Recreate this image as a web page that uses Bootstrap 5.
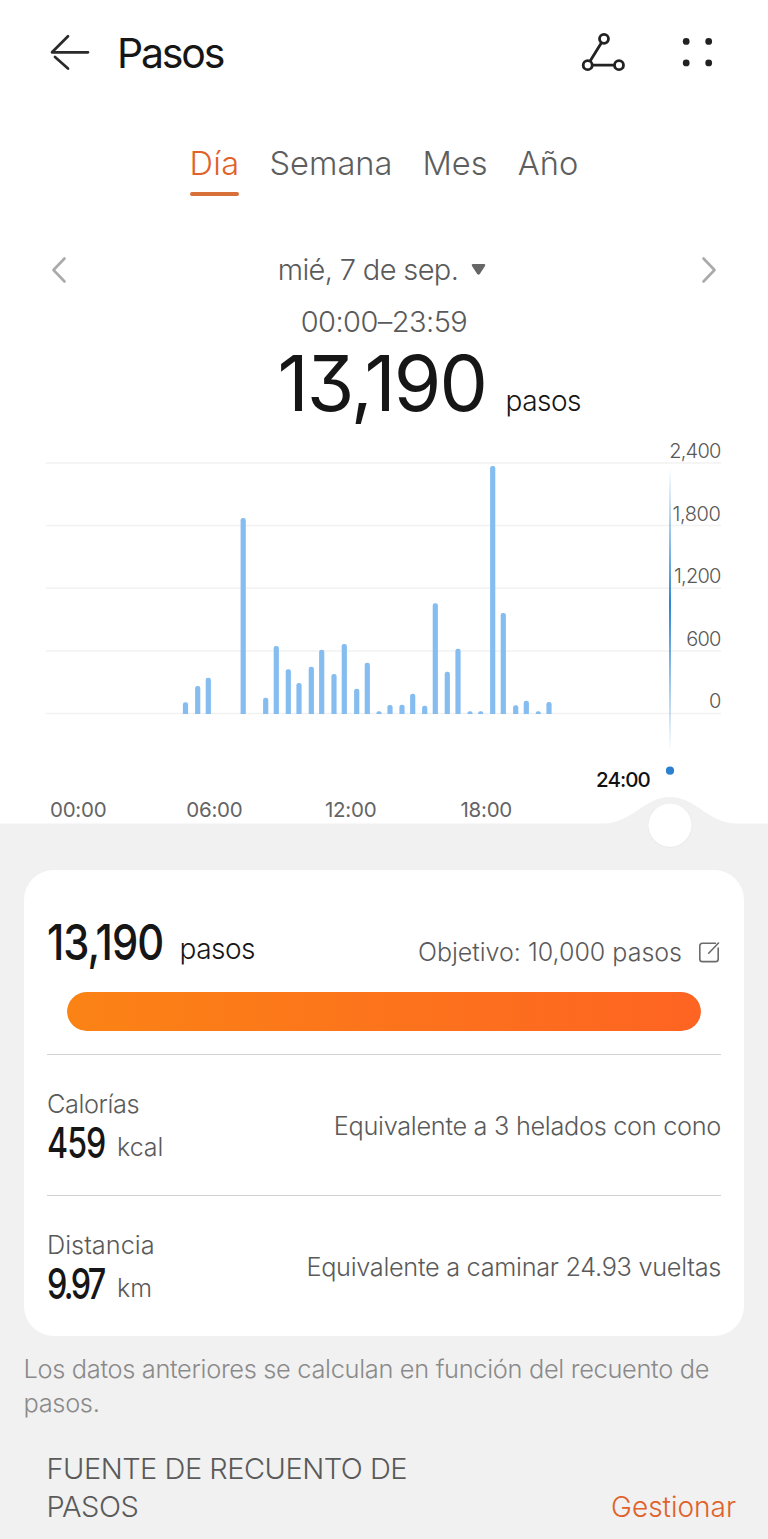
<!DOCTYPE html>
<html lang="es">
<head>
<meta charset="utf-8">
<meta name="viewport" content="width=device-width, initial-scale=1">
<title>Pasos</title>
<link rel="stylesheet" href="https://cdn.jsdelivr.net/npm/bootstrap@5.3.0/dist/css/bootstrap.min.css">
<style>
body{font-family:Inter,"Noto Sans",sans-serif;font-weight:300;background:#f1f1f1;color:#5a5a5a;overflow-x:hidden}
.ink{color:#161616}
.accent{color:#e0622a}
.topbar{height:106px;padding:0 52px 0 50px}
.topbar h1{font-size:41px;font-weight:400;line-height:60px;letter-spacing:-2.2px;margin-left:26px}
.periods{padding-top:36px;gap:31px}
.periods .nav-link{padding:0;color:#5e5e5e;font-size:32.6px;line-height:43px;text-align:center;white-space:nowrap}
.periods .nav-link.active{color:#e0622a}
.periods .nav-link::after{content:"";display:block;height:4.5px;margin-top:6.5px;border-radius:3px}
.periods .nav-link.active::after{background:#d8703a}
.w-dia{width:49px;letter-spacing:.3px}.w-sem{width:122px}.w-mes{width:64px}.w-ano{width:61px}
.daterow{margin-top:52px;height:44px;padding:0 51px}
.dateline{font-size:29px;letter-spacing:-.65px;line-height:44px;margin-left:-4px}
.hours{margin-top:10px;font-size:29px;letter-spacing:-.55px;line-height:40px}
.total{height:82px;padding-left:277.5px;padding-top:1px}
.total .figure-xl{font-size:76.8px;font-weight:400;line-height:82px;letter-spacing:-1.9px;width:228px;font-feature-settings:"cv09"}
.unit{font-size:28px;font-weight:350;letter-spacing:-.5px}
.chart{display:block;font-size:20px}
.panel{margin:0 24px 0 23.5px;height:465.5px;border-radius:30px;padding:36px 23px 0 23.5px}
.goalrow{height:72px}
.narrow{display:inline-block;transform-origin:0 50%;font-weight:500;white-space:nowrap}
.n-steps{font-size:50px;line-height:72px;width:132.5px;letter-spacing:-1.2px;transform:scaleX(.835)}
.n-cal{font-size:42px;width:70px;letter-spacing:-1.2px;transform:scaleX(.765)}
.n-km{font-size:42px;width:70px;letter-spacing:-3.5px;transform:scaleX(.77)}
.goal{font-size:25px;padding-top:22px;letter-spacing:0}
.meter{height:39px;margin:14px 20px 0;border-radius:20px;background:#eee}
.meter .progress-bar{border-radius:20px;background:linear-gradient(90deg,#fb8315,#fe6422)}
.fact{height:141px;border-top:1px solid #d2d2d2;font-size:25.3px}
.fact .label{line-height:36px}
.fact .value{height:42px;line-height:42px}
.fact .value small{font-size:25px;padding-top:7px}
.equiv{letter-spacing:-.3px;padding-top:2px}
.note{margin:16px 24px 0 23.5px;font-size:25.4px;line-height:34px;letter-spacing:-.32px;color:#8a8a8a}
.source{margin:30px 32px 0 46.5px;font-size:29px;line-height:38px;letter-spacing:-.5px}
.source a{font-size:28px;letter-spacing:0}
</style>
</head>
<body>
<section class="bg-white">
  <header class="topbar d-flex align-items-center">
    <svg width="41" height="40" viewBox="50 33 41 40" fill="none" stroke="#2a2a2a" stroke-width="2.7" stroke-linecap="round" stroke-linejoin="round"><path d="M88 52.3H52L68 36.2M55 57L68 68.6"/></svg>
    <h1 class="ink mb-0">Pasos</h1>
    <svg class="ms-auto" width="46" height="42" viewBox="581 32 46 42" fill="none" stroke="#222" stroke-width="2.8"><circle cx="604" cy="38.8" r="4.5"/><circle cx="587.7" cy="65.2" r="4.5"/><circle cx="619" cy="65.2" r="4.5"/><path d="M601.6 42.5L590 61.3M592.3 65.2H614.5"/></svg>
    <svg style="margin-left:53px" width="36" height="36" viewBox="680 35 36 36" fill="#222"><circle cx="686.2" cy="41.4" r="3.4"/><circle cx="708.7" cy="41.4" r="3.4"/><circle cx="686.2" cy="62.9" r="3.4"/><circle cx="708.7" cy="62.9" r="3.4"/></svg>
  </header>

  <nav class="periods nav justify-content-center">
    <a class="nav-link active w-dia" href="#">Día</a>
    <a class="nav-link w-sem" href="#">Semana</a>
    <a class="nav-link w-mes" href="#">Mes</a>
    <a class="nav-link w-ano" href="#">Año</a>
  </nav>

  <div class="daterow d-flex align-items-center justify-content-between">
    <svg width="16" height="28" fill="none" stroke="#aaa" stroke-width="2.6" stroke-linecap="round" stroke-linejoin="round"><path d="M13.5 2.5L2.5 14L13.5 25.5"/></svg>
    <div class="dateline d-flex align-items-center">mié, 7 de sep.<svg class="ms-2 ps-1" width="20" height="14" fill="#666"><path d="M2.6 1H14.4Q16 1.6 15 3L9.8 11Q8.5 12.6 7.2 11L2 3Q1 1.6 2.6 1Z"/></svg></div>
    <svg width="16" height="28" fill="none" stroke="#aaa" stroke-width="2.6" stroke-linecap="round" stroke-linejoin="round"><path d="M2.5 2.5L13.5 14L2.5 25.5"/></svg>
  </div>
  <div class="hours text-center">00:00–23:59</div>
  <div class="total d-flex align-items-baseline ink">
    <div class="figure-xl">13,190</div>
    <div class="unit">pasos</div>
  </div>
</section>

<svg class="chart" width="768" height="446" viewBox="0 424 768 446">
  <defs>
    <linearGradient id="cursor" x1="0" y1="0" x2="0" y2="1"><stop offset="0" stop-color="#2c86d2" stop-opacity="0"/><stop offset=".48" stop-color="#2c86d2"/><stop offset="1" stop-color="#2c86d2" stop-opacity="0"/></linearGradient>
    <clipPath id="plot"><rect x="40" y="440" width="690" height="274"/></clipPath>
  </defs>
  <path fill="#fff" d="M0 424H768V823.5H737C707 823.5 697 797 670 797S633 823.5 603 823.5H0Z"/>
  <path stroke="#f2f2f2" stroke-width="1.5" d="M46 463H721M46 525.5H721M46 588.3H721M46 651H721M46 713.6H721"/>
  <g id="bars" fill="#85bdf0" clip-path="url(#plot)"></g>
  <rect x="669" y="468" width="2" height="284" fill="url(#cursor)"/>
  <g fill="#585858" text-anchor="end" letter-spacing="-.8">
    <text x="720.5" y="458">2,400</text><text x="720.5" y="520.5" letter-spacing="-.4">1,800</text><text x="720.5" y="583.2">1,200</text><text x="720.5" y="645.8">600</text><text x="720.5" y="708.4">0</text>
  </g>
  <g fill="#646464" font-size="20.5" font-weight="400" letter-spacing="-.25">
    <text x="50" y="817">00:00</text><text x="186.3" y="817">06:00</text><text x="325" y="817">12:00</text><text x="460.5" y="817">18:00</text>
  </g>
  <text x="596" y="786.5" fill="#111" font-size="20.5" font-weight="500" letter-spacing="-.9">24:00</text>
  <circle cx="670" cy="770.7" r="4.1" fill="#2c80d0"/>
  <circle cx="670" cy="825.6" r="22.3" fill="#eaeaea"/>
  <circle cx="670" cy="825.2" r="21.6" fill="#fff"/>
</svg>

<main class="panel bg-white">
  <div class="goalrow d-flex align-items-center">
    <div class="narrow n-steps ink">13,190</div>
    <div class="unit ink" style="padding-top:13px">pasos</div>
    <div class="goal ms-auto d-flex align-items-center">Objetivo: 10,000 pasos
      <svg style="margin-left:17px" width="22" height="22" viewBox="0 0 22 22" fill="none" stroke="#6b6b6b" stroke-width="1.6" stroke-linecap="round"><path d="M16.5 1.2H3.5Q.8 1.2 .8 3.9V16.9Q.8 19.6 3.5 19.6H16.5Q19.2 19.6 19.2 16.9V6M9.7 11.2L19.5 1"/></svg>
    </div>
  </div>
  <div class="progress meter"><div class="progress-bar" style="width:100%"></div></div>
  <div class="fact d-flex align-items-center justify-content-between" style="margin-top:23px">
    <div><div class="label" style="letter-spacing:-.4px">Calorías</div><div class="value d-flex align-items-center"><span class="narrow n-cal ink">459</span><small>kcal</small></div></div>
    <div class="equiv">Equivalente a 3 helados con cono</div>
  </div>
  <div class="fact d-flex align-items-center justify-content-between">
    <div><div class="label">Distancia</div><div class="value d-flex align-items-center"><span class="narrow n-km ink">9.97</span><small>km</small></div></div>
    <div class="equiv">Equivalente a caminar 24.93 vueltas</div>
  </div>
</main>

<p class="note mb-0">Los datos anteriores se calculan en función del recuento de<br>pasos.</p>
<footer class="source d-flex align-items-end justify-content-between">
  <div>FUENTE DE RECUENTO DE<br>PASOS</div>
  <a class="accent text-decoration-none" href="#">Gestionar</a>
</footer>

<script src="https://cdn.jsdelivr.net/npm/bootstrap@5.3.0/dist/js/bootstrap.bundle.min.js"></script>
<script>
// Half-hour step bars: [centre x, top y]
const data=[[185.5,702.3],[197.7,686],[208.3,677.7],[243.2,518],[265.7,697.7],[276.3,646],[288.3,669.3],[299,683],[311.3,666.7],[321.7,649.7],[334,674],[344.3,644],[356.7,688.7],[367.3,662.7],[379,711.3],[390,705],[402,704.7],[412.7,693.7],[424.7,705.7],[435.3,603.3],[447.3,671.7],[458,648.7],[470,711.3],[480.7,711.3],[492.7,466],[503.3,613],[515.7,705.3],[526.3,700.7],[538.3,711.3],[549,702]];
document.getElementById('bars').innerHTML=data.map(([x,y])=>`<rect x="${x-2.6}" y="${y}" width="5.2" height="${720-y}" rx="2.2"/>`).join('');
</script>
</body>
</html>
